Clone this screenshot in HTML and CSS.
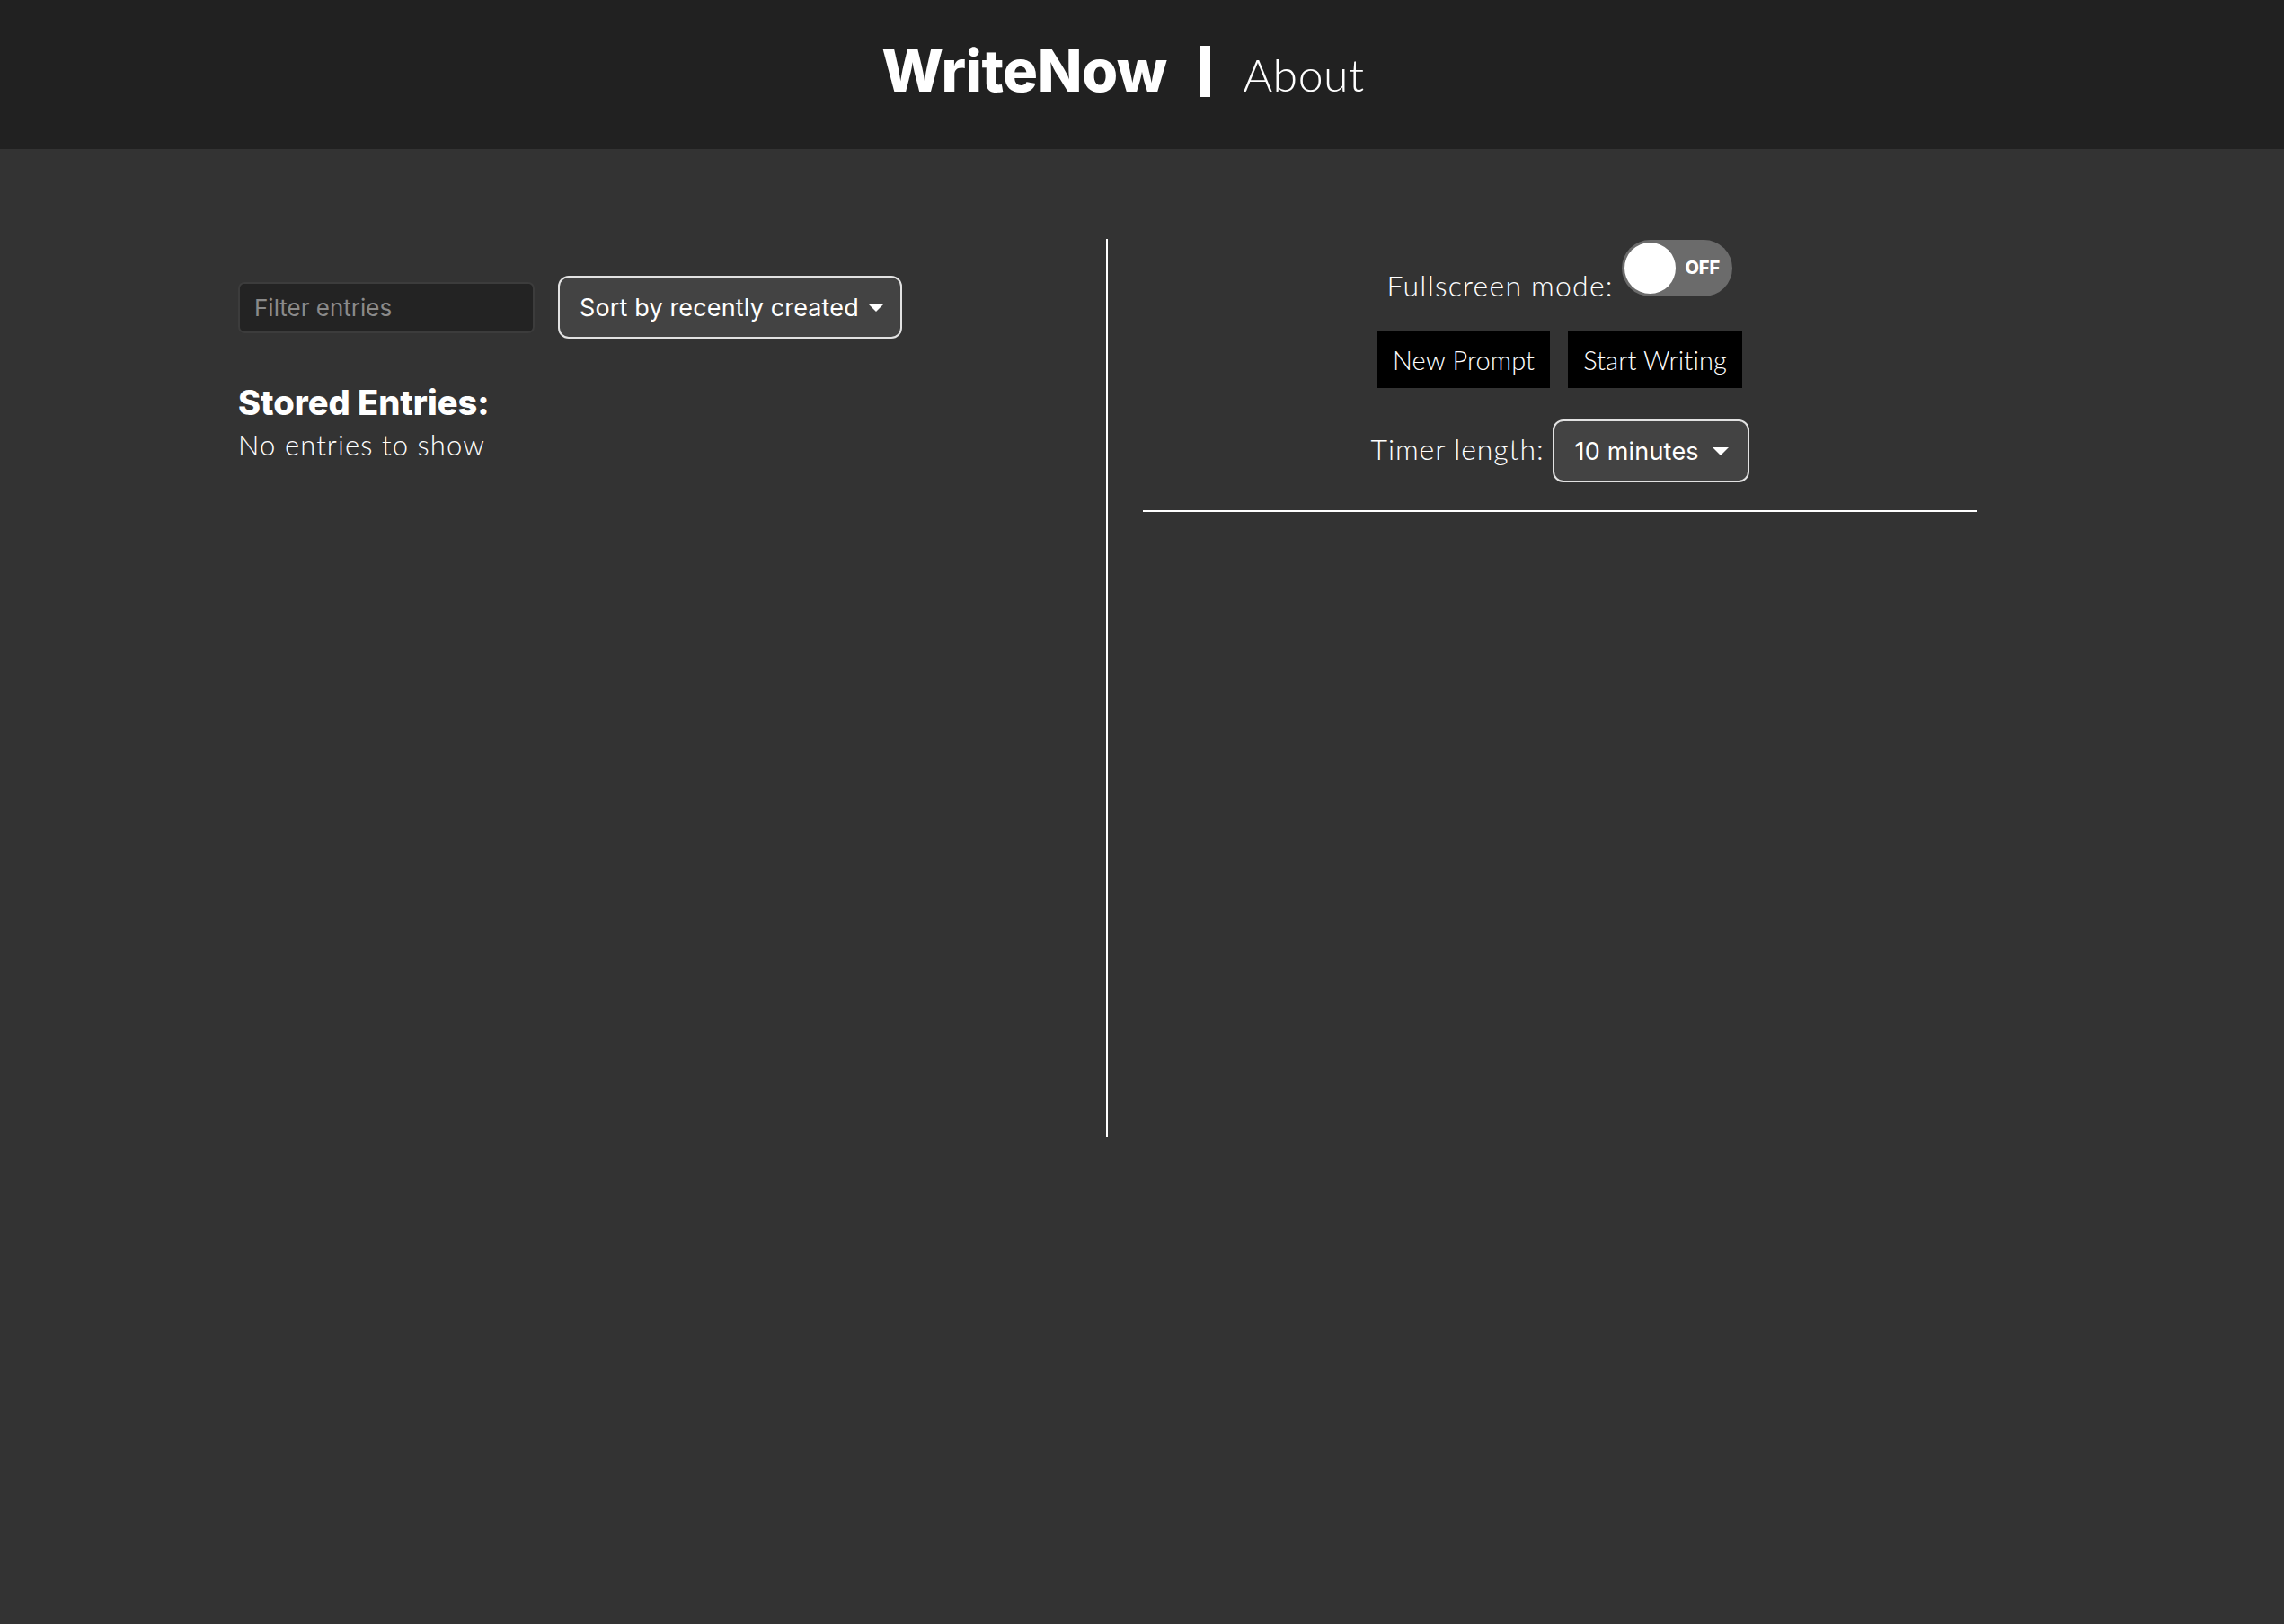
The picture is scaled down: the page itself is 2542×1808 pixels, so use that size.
FILE: index.html
```html
<!DOCTYPE html>
<html lang="en">
<head>
<meta charset="utf-8">
<title>WriteNow</title>
<link rel="stylesheet" href="styles.css">
</head>
<body>
<header class="topbar">
  <nav class="brand">
    <span class="logo">WriteNow</span>
    <span class="sep" aria-hidden="true"></span>
    <span class="about">About</span>
  </nav>
</header>
<main class="page">
  <section class="col-left">
    <div class="controls">
      <input class="filter" type="text" placeholder="Filter entries">
      <button class="sort">Sort by recently created <span class="caret"></span></button>
    </div>
    <h2 class="stored-title">Stored Entries:</h2>
    <p class="empty">No entries to show</p>
  </section>
  <section class="col-right">
    <div class="fs-row"><span class="fs-label">Fullscreen mode:</span> <span class="toggle"><span class="knob"></span><span class="toggle-text">OFF</span></span></div>
    <div class="btn-row">
      <button class="btn">New Prompt</button>
      <button class="btn">Start Writing</button>
    </div>
    <div class="timer-row">
      <span class="timer-label">Timer length:</span>
      <button class="select">10 minutes <span class="caret caret-lg"></span></button>
    </div>
    <div class="rule"></div>
  </section>
</main>
</body>
</html>
```
FILE: styles.css
```css
* { box-sizing: border-box; }
html, body { margin: 0; padding: 0; }
body {
  background: #333333;
  color: #ffffff;
  font-family: "Lato", "Open Sans", sans-serif;
  min-height: 1808px;
}
.topbar {
  background: #212121;
  height: 166px;
  display: flex;
  justify-content: center;
  align-items: center;
  padding-right: 42px;
}
.brand {
  display: flex;
  align-items: baseline;
  margin-top: -9px;
}
.logo {
  font-family: "Inter", sans-serif;
  font-weight: 800;
  font-size: 65px;
  letter-spacing: -0.5px;
}
.sep {
  display: inline-block;
  width: 12px;
  height: 57px;
  background: #ffffff;
  margin: 0 36px 0 37px;
  position: relative;
  top: 6px;
}
.about {
  font-weight: 300;
  font-size: 50px;
  letter-spacing: 0.5px;
}
.page {
  display: flex;
  padding-top: 100px;
  padding-left: 265px;
}
.col-left {
  width: 968px;
  height: 1000px;
  border-right: 2px solid #ffffff;
}
.controls {
  display: flex;
  align-items: center;
  gap: 26px;
  margin-top: 41px;
}
.filter {
  width: 330px;
  height: 57px;
  background: #232323;
  border: 2px solid #3c3c3c;
  border-radius: 7px;
  padding: 0 16px;
  font-family: "Inter", sans-serif;
  font-size: 26px;
  color: #ffffff;
  outline: none;
}
.filter::placeholder { color: #8a8a8a; }
.sort {
  height: 70px;
  width: 383px;
  background: #434343;
  border: 2px solid #e2e2e2;
  border-radius: 12px;
  color: #ffffff;
  font-family: "Inter", sans-serif;
  font-size: 27px;
  letter-spacing: 0.15px;
  padding: 0 18px 0 22px;
  display: flex;
  align-items: center;
  justify-content: space-between;
  white-space: nowrap;
}
.caret {
  display: inline-block;
  width: 0;
  height: 0;
  border-left: 9px solid transparent;
  border-right: 9px solid transparent;
  border-top: 9px solid #ffffff;
  margin-left: 6px;
}
.stored-title {
  font-family: "Inter", sans-serif;
  font-weight: 800;
  font-size: 38px;
  line-height: 1;
  margin: 52px 0 0 0;
  letter-spacing: 0;
}
.empty {
  font-weight: 300;
  font-size: 31px;
  letter-spacing: 1.1px;
  line-height: 1;
  margin: 13px 0 0 0;
}
.col-right {
  width: 967px;
  padding-left: 39px;
  padding-top: 1px;
}
.fs-row {
  height: 101px;
  text-align: center;
  font-size: 32px;
  font-weight: 300;
}
.fs-label {
  letter-spacing: 1.2px;
}
.toggle {
  display: inline-block;
  overflow: hidden;
  vertical-align: baseline;
  width: 123px;
  height: 63px;
  border-radius: 32px;
  background: #6b6b6b;
  position: relative;
  margin-left: 1px;
}
.knob {
  position: absolute;
  left: 3px;
  top: 3px;
  width: 57px;
  height: 57px;
  border-radius: 50%;
  background: #ffffff;
}
.toggle-text {
  position: absolute;
  left: 70px;
  top: 0;
  line-height: 63px;
  font-family: "Inter", sans-serif;
  font-weight: 800;
  font-size: 20px;
  color: #ffffff;
}
.btn-row {
  display: flex;
  justify-content: center;
  gap: 20px;
}
.btn {
  height: 64px;
  background: #000000;
  color: #ffffff;
  border: none;
  border-radius: 0;
  padding: 0 17px;
  font-family: "Lato", sans-serif;
  font-weight: 300;
  font-size: 29px;
  letter-spacing: 0.1px;
}
.timer-row {
  display: flex;
  justify-content: center;
  align-items: baseline;
  gap: 9px;
  margin-top: 35px;
}
.timer-label {
  font-weight: 300;
  font-size: 32px;
  letter-spacing: 0.9px;
}
.select {
  height: 70px;
  width: 219px;
  background: #434343;
  border: 2px solid #e2e2e2;
  border-radius: 12px;
  color: #ffffff;
  font-family: "Inter", sans-serif;
  font-size: 27px;
  letter-spacing: 0.2px;
  padding: 0 21px 0 23px;
  display: inline-flex;
  align-items: center;
  justify-content: space-between;
  white-space: nowrap;
}
.rule {
  height: 2px;
  background: #ffffff;
  margin-top: 31px;
}
```
